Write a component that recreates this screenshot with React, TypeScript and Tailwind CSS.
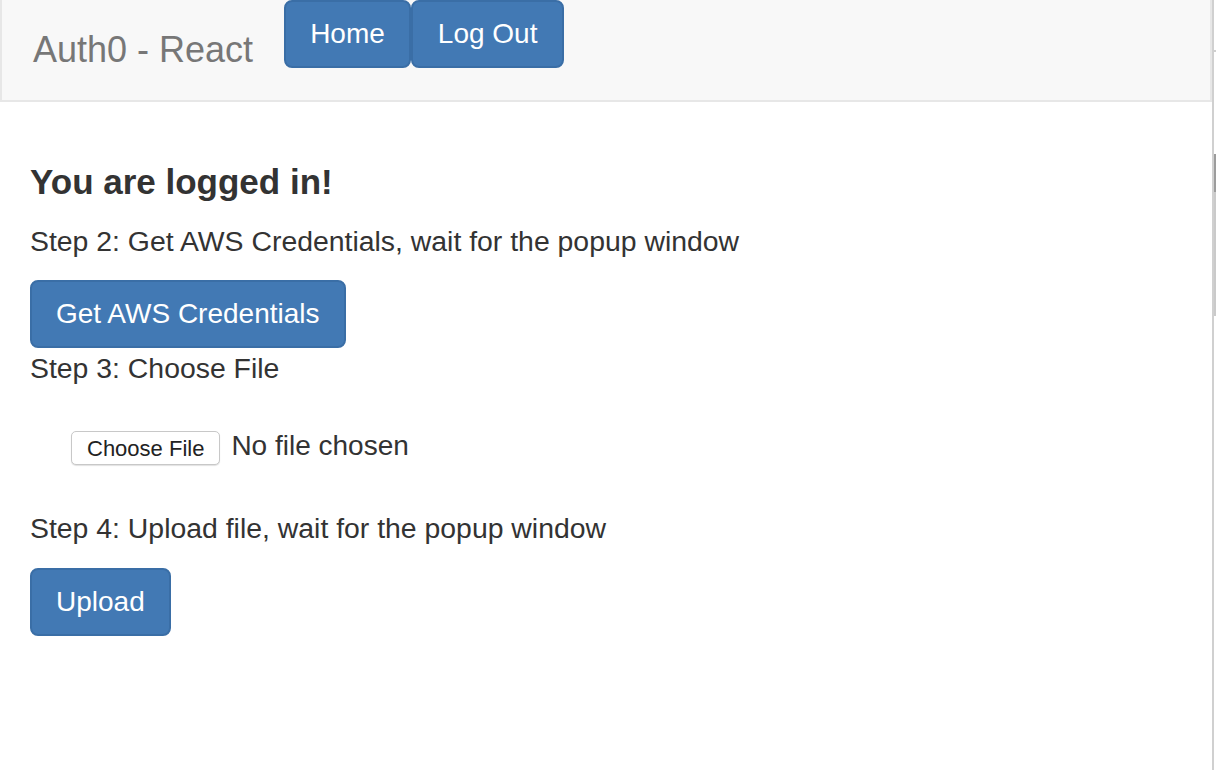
import React from "react";

const Btn = ({ label, className = "" }: { label: string; className?: string }) => {
  return (
    <button
      className={`bg-[#4279b4] border-2 border-[#3a6ea6] text-white text-[28px] leading-[40px] py-[12px] rounded-[8px] ${className || "px-[24px]"}`}
    >
      {label}
    </button>
  );
};

const App = () => {
  return (
    <div className="flex w-[1216px] h-[770px] bg-white font-['Liberation_Sans',Arial,sans-serif] text-[#333] overflow-hidden">
      <div className="w-[1212px] flex flex-col">
        <nav className="h-[102px] bg-[#f8f8f8] border-2 border-t-0 border-[#e7e7e7] flex items-start">
          <div className="pl-[31px] pr-[31px] h-[100px] flex items-center text-[36px] text-[#777]">
            Auth0 - React
          </div>
          <Btn label="Home" />
          <Btn label="Log Out" className="px-[25px]" />
        </nav>
        <div className="px-[30px] pt-[60px]">
          <h4 className="text-[35px] leading-[40px] font-bold text-[#333] mb-[19px]">
            You are logged in!
          </h4>
          <p className="text-[28.4px] leading-[40px] mb-[19px]">
            Step 2: Get AWS Credentials, wait for the popup window
          </p>
          <Btn label="Get AWS Credentials" />
          <p className="text-[28.4px] leading-[40px]">Step 3: Choose File</p>
          <div className="flex items-center pl-[41px] mt-[42px] h-[36px]">
            <span className="h-[34px] px-[15px] flex items-center bg-white border border-[#c8c8c8] rounded-[5px] shadow-[0_1px_1px_rgba(0,0,0,0.12)] text-[22px] text-[#222]">
              Choose File
            </span>
            <span className="ml-[11px] text-[28px] leading-[40px] -mt-[5px]">No file chosen</span>
          </div>
          <p className="text-[28.4px] leading-[40px] mt-[42px] mb-[20px]">
            Step 4: Upload file, wait for the popup window
          </p>
          <Btn label="Upload" />
        </div>
      </div>
      <div className="w-[2px] bg-[#d0d0d0]" />
      <div className="w-[2px] flex flex-col bg-white">
        <div className="h-[50px] bg-white" />
        <div className="h-[2px] bg-[#cfcfcf]" />
        <div className="h-[102px] bg-white" />
        <div className="h-[38px] bg-[#9c9c9c]" />
        <div className="h-[124px] bg-[#cacaca]" />
      </div>
    </div>
  );
};

export default App;
